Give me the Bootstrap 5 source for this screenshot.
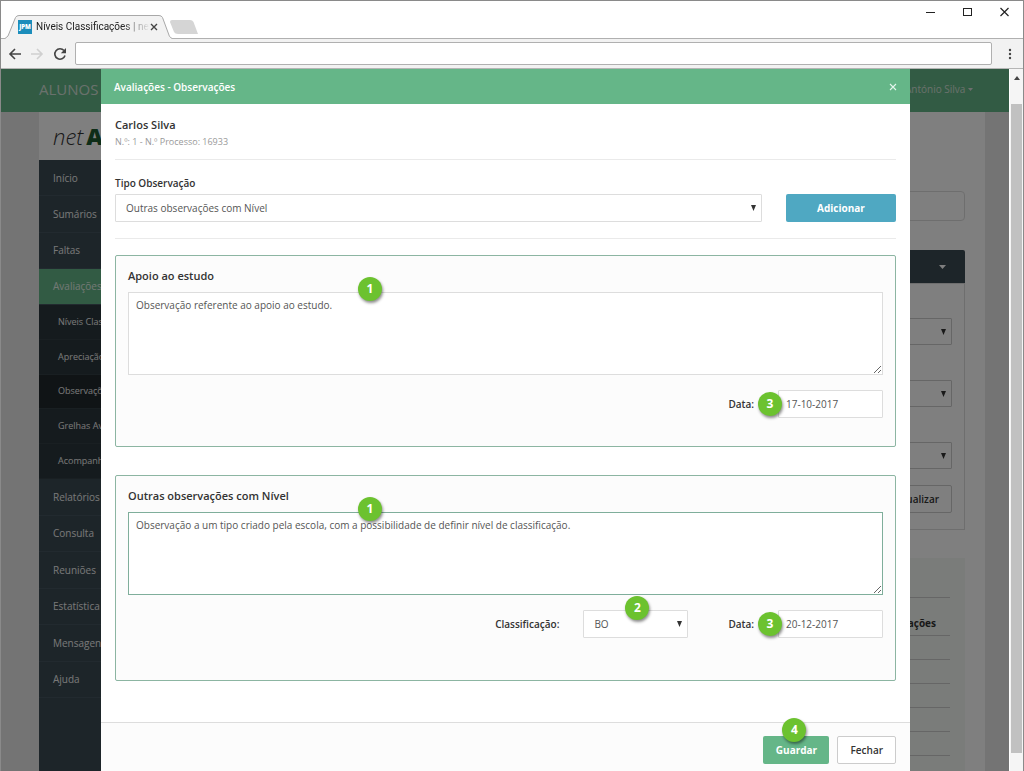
<!DOCTYPE html>
<html lang="pt">
<head>
<meta charset="utf-8">
<meta name="viewport" content="width=device-width, initial-scale=1">
<title>Níveis Classificações | net</title>
<link href="https://cdn.jsdelivr.net/npm/bootstrap@5.3.0/dist/css/bootstrap.min.css" rel="stylesheet">
<style>
:root { --green: #65b688; --slate: #3a4a52; --line: #ddd; }
body { font-family: "Open Sans", "Noto Sans", sans-serif; font-size: 10px; line-height: 16px; color: #333; background: #fff; }
a { color: inherit; text-decoration: none; }

/* browser window */
.browser { border: 1px solid #8a8a8a; border-bottom: 0; }
.tabstrip { height: 37px; }
.browser-tab { width: 167px; height: 24px; margin-left: 4px; margin-bottom: -1px; padding: 0 15px 0 13px; z-index: 1; }
.browser-tab > svg.tab-shape { position: absolute; inset: 0; width: 100%; height: 100%; }
.favicon { width: 14px; height: 14px; background: #1c8dbb; color: #fff; font-size: 6px; line-height: 14px; font-weight: 800; text-align: center; z-index: 1; }
.tab-title { width: 114px; margin-left: 4px; font-family: Roboto, sans-serif; color: #222; z-index: 1; -webkit-mask-image: linear-gradient(90deg, #000 75%, transparent); mask-image: linear-gradient(90deg, #000 75%, transparent); }
.plain { border: 0; background: none; padding: 0; display: flex; align-items: center; justify-content: center; color: inherit; }
.new-tab { margin: 14px 0 0 -2px; }
.window-buttons { padding: 5px 13px 0 0; }
.toolbar { height: 31px; border-top: 1px solid #b0b0b0; border-bottom: 1px solid #b5b5b5; background: #f2f2f2; padding: 0 11px 0 7px; }
.address { height: 23px; border: 1px solid #b0b0b0; border-radius: 2px; background: #fff; padding: 0 8px; }
.scrollbar { width: 14px; background: #f5f5f5; border-left: 1px solid #fff; padding: 0 1px 18px; }
.scrollbar-up { height: 35px; }
.scrollbar-thumb { background: #c1c1c1; }
.stack { display: grid; grid-template: minmax(0, 1fr) / minmax(0, 1fr); overflow: hidden; }
.stack > * { grid-area: 1 / 1; min-width: 0; }

/* application behind the dialog */
.app { background: #e9e9e9; }
.app-bar { height: 43px; background: var(--green); color: #d5e3da; padding: 0 36px 4px 38px; }
.app-bar .area-name { font-size: 15px; }
.app-body { margin: 0 24px 0 38px; background: #fff; }
.side { width: 233px; background: var(--slate); color: #fff; }
.logo { height: 48px; background: #fff; color: #333; padding-left: 14px; font-size: 22px; font-weight: 300; font-style: italic; }
.logo b { font-size: 23px; font-style: normal; font-weight: 800; color: #1c5a30; margin-left: 3px; }
.side a { display: flex; align-items: center; padding-left: 14px; color: #f0f0f0; border-bottom: 1px solid #44555e; white-space: nowrap; }
.side a.active { background: var(--green); color: #e4f2ea; }
.side .menu-top { height: 145px; }
.side .menu-sub { height: 174px; background: #2b363c; }
.side .menu-rest { height: 219px; }
.side .menu-sub a { padding-left: 19px; font-size: 9px; border-color: #323e45; }
.side .menu-sub a.current { background: #20282d; }
.main { padding: 79px 20px 0 20px; }
.search-box { height: 30px; border: 1px solid var(--line); }
.filter-head { height: 33px; background: var(--slate); color: #fff; padding-right: 19px; margin-top: 29px; border-radius: 2px 2px 0 0; }
.filter { border: 1px solid var(--line); padding: 34px 12px 16px; }
.filter .pick { height: 27px; margin-bottom: 35px; border-color: #ccc; }
.filter .pick:nth-of-type(3) { margin-bottom: 16px; }
.results { background: #f5f9f4; margin-top: 28px; padding: 15px 15px 0; }
.results table { width: 100%; font-weight: 700; }
.results th, .results td { border-bottom: 1px solid #ccc; text-align: right; height: 24px; }
.results th { height: 38px; padding: 14px 14px 0; }

/* form controls */
.pick { appearance: none; border: 1px solid var(--line); border-radius: 1px; color: #555; padding: 0 10px; background: transparent url("data:image/svg+xml,%3Csvg xmlns='http://www.w3.org/2000/svg' width='5' height='6' viewBox='0 0 5 6'%3E%3Cpath d='M0 0h5L2.500 6z' fill='%23333'/%3E%3C/svg%3E") no-repeat right 5px center; }
.ctl { height: 28px; border: 1px solid var(--line); border-radius: 1px; color: #555; background-color: #fff; }
.ctl-narrow { width: 105px; }
.btn-flat { height: 28px; padding: 0 12px; border-radius: 2px; font-size: 10px; line-height: 16px; }
.btn-add { width: 110px; background: #4fa8c2; color: #fff; font-weight: 700; }
.btn-save { background: var(--green); color: #fff; font-weight: 700; width: 66px; padding: 0; }
.btn-plain { background: #fff; border: 1px solid #ccc; color: #333; font-weight: 600; }
.btn-flat:hover { filter: brightness(.96); }

/* dialog */
.shade { background: rgba(0, 0, 0, .5); padding: 0 99px 0 100px; z-index: 2; }
.dialog-head { height: 35px; background: var(--green); color: #fff; padding: 0 13px; font-weight: 600; }
.dialog-body { padding: 13px 14px 41px; }
.person { font-size: 11px; font-weight: 600; }
.person-sub { font-size: 9px; line-height: 18px; color: #999; margin-bottom: 8px; }
.rule { height: 1px; background: #eaeaea; }
.form-title { margin: 15px 0 3px; font-weight: 600; display: block; }
.note { border: 1px solid #8cb5a2; border-radius: 2px; background: #fcfcfc; padding: 12px 12px 28px; }
.note h2 { font-size: 11px; line-height: 16px; font-weight: 600; margin: 0 0 8px; }
.note textarea { display: block; width: 100%; height: 83px; border: 1px solid var(--line); padding: 4px 7px; color: #555; font-size: 10px; line-height: 16px; background: #fff; }
.note textarea.editing { border-color: #7fae9b; }
.note-last { margin-top: 28px; padding-bottom: 42px; }
.fields { margin-top: 15px; gap: 40px; }
.fields label { font-weight: 600; }
.fields input { padding: 0 7px; }
.dialog-foot { border-top: 1px solid var(--line); background: #fcfcfc; padding: 13px 14px 7px; }

/* numbered step markers */
.step { position: absolute; width: 24px; height: 24px; border-radius: 50%; background: #6cc22f; color: #fff; font-size: 12px; line-height: 24px; font-weight: 700; text-align: center; box-shadow: 1px 2px 3px rgba(0, 0, 0, .45); }
.step-text { left: 230px; top: -15px; }
.step-pick { left: 42px; top: -14px; }
.step-date { left: -20px; top: 2px; }
.step-save { left: 19px; top: -18px; }
</style>
</head>
<body>
<div class="browser d-flex flex-column min-vh-100">
  <header>
    <div class="tabstrip d-flex align-items-end">
      <div class="browser-tab position-relative d-flex align-items-center">
        <svg class="tab-shape" viewBox="0 0 167 24" preserveAspectRatio="none" aria-hidden="true"><path d="M0 23.500L3 21L10.500 2.500Q11.500 .5 14 .5H154Q156.500 .5 157.500 2.500L164.500 21.500L167 23.500V24H0z" fill="#f2f2f2"/><path d="M0 23.500L3 21L10.500 2.500Q11.500 .5 14 .5H154Q156.500 .5 157.500 2.500L164.500 21.500L167 23.500" fill="none" stroke="#a8a8a8"/></svg>
        <span class="favicon flex-shrink-0">JPM</span>
        <span class="tab-title flex-shrink-0 overflow-hidden text-nowrap">Níveis Classificações | net</span>
        <button class="plain position-relative" type="button" aria-label="Fechar separador"><svg width="8" height="8" viewBox="0 0 8 8"><path d="M1 1l6 6M7 1L1 7" stroke="#444" stroke-width="1.400"/></svg></button>
      </div>
      <button class="plain new-tab align-self-center" type="button" aria-label="Novo separador"><svg width="28" height="14" viewBox="0 0 28 14"><path d="M2 0H20Q22.500 0 23.500 2L28 14H8Q5 14 4 12L0 2Q0 0 2 0z" fill="#d5d5d5"/></svg></button>
      <div class="window-buttons ms-auto align-self-start d-flex">
        <button class="plain" type="button" aria-label="Minimizar"><svg width="37" height="12" viewBox="0 0 37 12"><path d="M18 6.500h9" stroke="#222"/></svg></button>
        <button class="plain" type="button" aria-label="Maximizar"><svg width="37" height="12" viewBox="0 0 37 12"><rect x="18.500" y="2.500" width="8" height="7" fill="none" stroke="#222"/></svg></button>
        <button class="plain" type="button" aria-label="Fechar"><svg width="28" height="12" viewBox="0 0 28 12"><path d="M18.500 2l8 8M26.500 2l-8 8" stroke="#222" stroke-width="1.200"/></svg></button>
      </div>
    </div>
    <div class="toolbar d-flex align-items-center">
      <button class="plain" type="button" aria-label="Recuar"><svg width="14" height="14" viewBox="0 0 14 14"><path d="M13 7H2M7 2L2 7l5 5" fill="none" stroke="#444" stroke-width="1.600"/></svg></button>
      <button class="plain ms-2" type="button" aria-label="Avançar"><svg width="14" height="14" viewBox="0 0 14 14"><path d="M1 7h11M7 2l5 5-5 5" fill="none" stroke="#d0d0d0" stroke-width="1.600"/></svg></button>
      <button class="plain ms-2 me-2" type="button" aria-label="Recarregar"><svg width="15" height="14" viewBox="0 0 15 14"><path d="M13 8.500A5.200 5.200 0 1 1 12 3.600" fill="none" stroke="#444" stroke-width="1.600"/><path d="M14 1v5.200H8.800z" fill="#444"/></svg></button>
      <input class="address flex-fill" type="text" aria-label="Endereço">
      <button class="plain ms-3" type="button" aria-label="Menu"><svg width="4" height="14" viewBox="0 0 4 14" fill="#444"><circle cx="2" cy="3" r="1.200"/><circle cx="2" cy="7" r="1.200"/><circle cx="2" cy="11" r="1.200"/></svg></button>
    </div>
  </header>

  <div class="d-flex flex-fill">
    <div class="stack flex-fill">
      <div class="app d-flex flex-column" aria-hidden="true">
        <div class="app-bar d-flex align-items-center justify-content-between">
          <span class="area-name">ALUNOS</span>
          <span>António Silva <svg width="5" height="3" viewBox="0 0 5 3"><path d="M0 0h5L2.500 3z" fill="#ddd"/></svg></span>
        </div>
        <div class="app-body d-flex flex-fill">
          <nav class="side flex-shrink-0">
            <div class="logo d-flex align-items-center">net<b>A</b></div>
            <div class="menu-top d-flex flex-column">
              <a class="flex-fill" href="#">Início</a><a class="flex-fill" href="#">Sumários</a><a class="flex-fill" href="#">Faltas</a><a class="flex-fill active" href="#">Avaliações</a>
            </div>
            <div class="menu-sub d-flex flex-column">
              <a class="flex-fill" href="#">Níveis Clas</a><a class="flex-fill" href="#">Apreciação</a><a class="flex-fill current" href="#">Observações</a><a class="flex-fill" href="#">Grelhas Av</a><a class="flex-fill" href="#">Acompanh</a>
            </div>
            <div class="menu-rest d-flex flex-column">
              <a class="flex-fill" href="#">Relatórios</a><a class="flex-fill" href="#">Consulta</a><a class="flex-fill" href="#">Reuniões</a><a class="flex-fill" href="#">Estatística</a><a class="flex-fill" href="#">Mensagens</a><a class="flex-fill" href="#">Ajuda</a>
            </div>
          </nav>
          <div class="main flex-fill d-flex flex-column">
            <div class="search-box rounded-1"></div>
            <div class="filter-head d-flex align-items-center justify-content-end"><svg width="7" height="4" viewBox="0 0 7 4"><path d="M0 0h7L3.500 4z" fill="#fff"/></svg></div>
            <div class="filter d-flex flex-column">
              <select class="pick w-100" aria-label="Ano"></select>
              <select class="pick w-100" aria-label="Turma"></select>
              <select class="pick w-100" aria-label="Período"></select>
              <button class="btn btn-flat btn-plain align-self-end" type="button">Atualizar</button>
            </div>
            <div class="results flex-fill">
              <table>
                <thead><tr><td></td></tr><tr><th>Observações</th></tr></thead>
                <tbody><tr><td></td></tr><tr><td></td></tr><tr><td></td></tr><tr><td></td></tr><tr><td></td></tr></tbody>
              </table>
            </div>
          </div>
        </div>
      </div>

      <div class="shade d-flex">
        <form class="flex-fill d-flex flex-column bg-white" role="dialog" aria-label="Avaliações - Observações">
          <div class="dialog-head d-flex align-items-center justify-content-between">
            <span>Avaliações - Observações</span>
            <button class="plain" type="button" aria-label="Fechar"><svg width="8" height="8" viewBox="0 0 8 8"><path d="M1 1l6 6M7 1L1 7" stroke="#e4f5ec" stroke-width="1.100"/></svg></button>
          </div>
          <div class="dialog-body flex-fill">
            <div class="person">Carlos Silva</div>
            <div class="person-sub">N.º: 1 - N.º Processo: 16933</div>
            <div class="rule"></div>
            <label class="form-title" for="tipo">Tipo Observação</label>
            <div class="d-flex gap-4">
              <select class="pick ctl flex-fill" id="tipo"><option>Outras observações com Nível</option></select>
              <button class="btn btn-flat btn-add flex-shrink-0" type="button">Adicionar</button>
            </div>
            <div class="rule mt-3"></div>

            <section class="note mt-3">
              <h2>Apoio ao estudo</h2>
              <div class="position-relative">
                <textarea aria-label="Apoio ao estudo">Observação referente ao apoio ao estudo.</textarea>
                <span class="step step-text">1</span>
              </div>
              <div class="fields d-flex justify-content-end">
                <div class="d-flex align-items-center gap-4">
                  <label for="data1">Data:</label>
                  <div class="position-relative"><input class="ctl ctl-narrow" id="data1" type="text" value="17-10-2017"><span class="step step-date">3</span></div>
                </div>
              </div>
            </section>

            <section class="note note-last">
              <h2>Outras observações com Nível</h2>
              <div class="position-relative">
                <textarea class="editing" aria-label="Outras observações com Nível">Observação a um tipo criado pela escola, com a possibilidade de definir nível de classificação.</textarea>
                <span class="step step-text">1</span>
              </div>
              <div class="fields d-flex justify-content-end">
                <div class="d-flex align-items-center gap-4">
                  <label for="nivel">Classificação:</label>
                  <div class="position-relative"><select class="pick ctl ctl-narrow" id="nivel"><option>BO</option></select><span class="step step-pick">2</span></div>
                </div>
                <div class="d-flex align-items-center gap-4">
                  <label for="data2">Data:</label>
                  <div class="position-relative"><input class="ctl ctl-narrow" id="data2" type="text" value="20-12-2017"><span class="step step-date">3</span></div>
                </div>
              </div>
            </section>
          </div>
          <div class="dialog-foot d-flex justify-content-end gap-2">
            <div class="position-relative"><button class="btn btn-flat btn-save" type="button">Guardar</button><span class="step step-save">4</span></div>
            <button class="btn btn-flat btn-plain" type="button">Fechar</button>
          </div>
        </form>
      </div>
    </div>
    <div class="scrollbar d-flex flex-column">
      <div class="scrollbar-up text-center"><svg width="6" height="4" viewBox="0 0 6 4"><path d="M0 4h6L3 0z" fill="#444"/></svg></div>
      <div class="scrollbar-thumb flex-fill"></div>
    </div>
  </div>
</div>
<script src="https://cdn.jsdelivr.net/npm/bootstrap@5.3.0/dist/js/bootstrap.bundle.min.js"></script>
</body>
</html>
